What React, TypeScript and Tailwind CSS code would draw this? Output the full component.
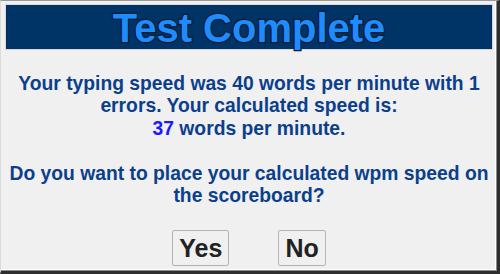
export default function App() {
  return (
    <div className="w-[500px] h-[274px] bg-[#f0f0f0] border-t border-l border-t-[#9a9a9a] border-l-[#dcdcdc] border-r-[3px] border-b-[3px] border-r-[#2e2e2e] border-b-[#2e2e2e] font-['Liberation_Sans',Arial,sans-serif]">
      <div className="h-full flex flex-col border-r border-b border-r-[#8a8a8a] border-b-[#8a8a8a]">
        <div className="h-full flex flex-col border-r border-b border-white pt-[3px] pl-[4px] pr-[2px]">
          <div className="h-[46px] bg-[#003366] border border-[#d8d8d8] flex items-center justify-center">
            <h1
              className="text-[40px] font-bold text-[#1e8cff] leading-none mt-[2px]"
              style={{ WebkitTextStroke: "2.5px #0a1c30", paintOrder: "stroke fill" }}
            >
              Test Complete
            </h1>
          </div>
          <div className="mt-[23px] text-center text-[19.3px] font-bold leading-[22.4px] text-[#0b3f8c]">
            Your typing speed was 40 words per minute with 1 errors. Your calculated speed is:
            <br />
            <span className="text-[#1a1aff]">37</span> words per minute.
            <br />
            <br />
            Do you want to place your calculated wpm speed on the scoreboard?
          </div>
          <div className="flex justify-center gap-[49px] mt-[23px]">
            <button className="h-[36px] px-[6px] bg-[#f0f0f0] border border-[#b4b4b4] rounded-[2px] text-[25px] font-bold text-[#222] leading-none">
              Yes
            </button>
            <button className="h-[36px] px-[6px] bg-[#f0f0f0] border border-[#b4b4b4] rounded-[2px] text-[25px] font-bold text-[#222] leading-none">
              No
            </button>
          </div>
        </div>
      </div>
    </div>
  );
}
